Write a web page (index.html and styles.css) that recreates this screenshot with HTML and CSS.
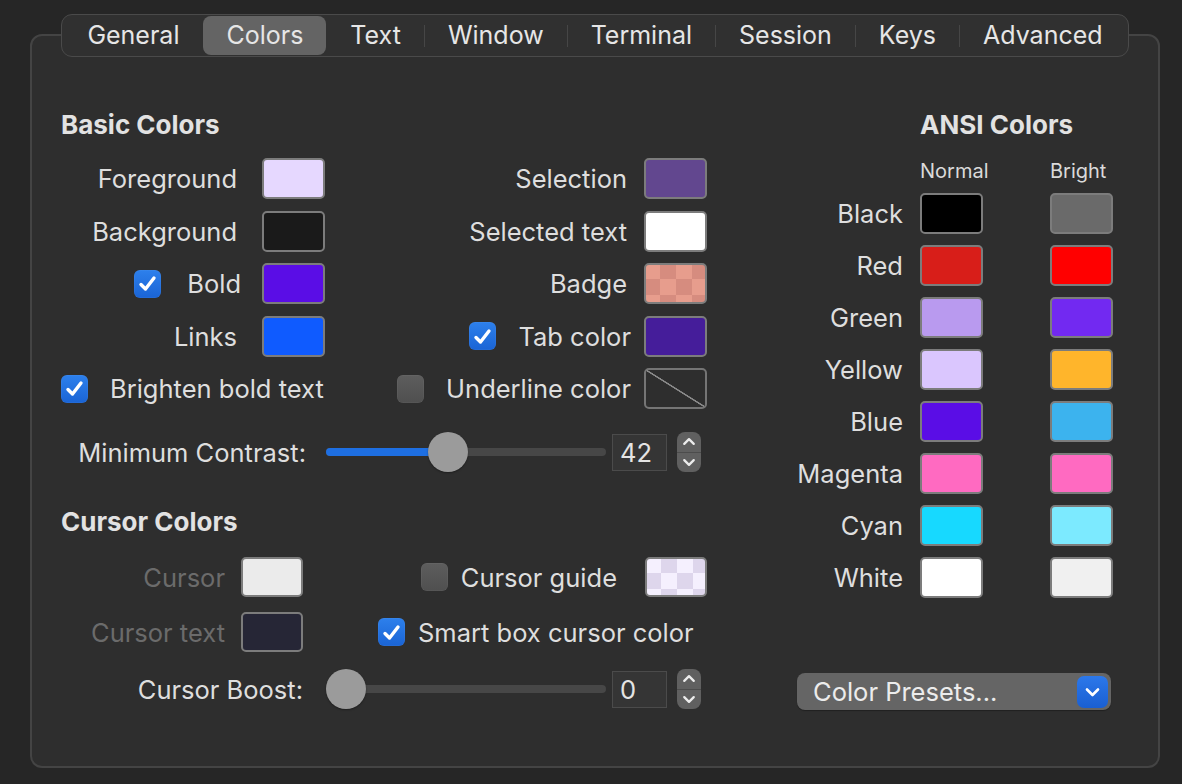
FILE: index.html
```html
<!DOCTYPE html>
<html>
<head>
<meta charset="utf-8">
<link rel="stylesheet" href="styles.css">
</head>
<body>
<div class="panel">
  <nav class="tabs">
    <span class="tab">General</span><span class="sep hidden"></span>
    <span class="tab active">Colors</span><span class="sep hidden"></span>
    <span class="tab">Text</span><span class="sep"></span>
    <span class="tab">Window</span><span class="sep"></span>
    <span class="tab">Terminal</span><span class="sep"></span>
    <span class="tab">Session</span><span class="sep"></span>
    <span class="tab">Keys</span><span class="sep"></span>
    <span class="tab">Advanced</span>
  </nav>

  <div class="content">
    <section class="left">
      <h2 class="heading">Basic Colors</h2>
      <div class="basic-grid">
        <div class="cell col-a">Foreground</div>
        <div class="swatch c-fg"></div>
        <div class="cell col-b">Selection</div>
        <div class="swatch c-sel"></div>

        <div class="cell col-a">Background</div>
        <div class="swatch c-bg"></div>
        <div class="cell col-b">Selected text</div>
        <div class="swatch c-white"></div>

        <div class="cell col-a chk"><span class="checkbox on"><svg viewBox="0 0 27 27"><path d="M7 14.5 L11.5 19 L20 8" /></svg></span><span>Bold</span></div>
        <div class="swatch c-bold"></div>
        <div class="cell col-b">Badge</div>
        <div class="swatch c-badge"></div>

        <div class="cell col-a">Links</div>
        <div class="swatch c-links"></div>
        <div class="cell col-b chk"><span class="checkbox on"><svg viewBox="0 0 27 27"><path d="M7 14.5 L11.5 19 L20 8" /></svg></span><span>Tab color</span></div>
        <div class="swatch c-tab"></div>

        <div class="cell span-a"><span class="checkbox on"><svg viewBox="0 0 27 27"><path d="M7 14.5 L11.5 19 L20 8" /></svg></span><span>Brighten bold text</span></div>
        <div class="cell col-b chk"><span class="checkbox"></span><span>Underline color</span></div>
        <div class="swatch c-none"></div>
      </div>

      <div class="slider-row contrast">
        <div class="slider-label">Minimum Contrast:</div>
        <div class="slider">
          <div class="track"><div class="fill" style="width: 122px"></div></div>
          <div class="thumb" style="left: 102px"></div>
        </div>
        <div class="field">42</div>
        <div class="stepper">
          <span class="step"><svg viewBox="0 0 24 20"><path d="M7 12.5 L12 7.5 L17 12.5" /></svg></span>
          <span class="step-sep"></span>
          <span class="step"><svg viewBox="0 0 24 20"><path d="M7 7.5 L12 12.5 L17 7.5" /></svg></span>
        </div>
      </div>

      <h2 class="heading cursor-head">Cursor Colors</h2>
      <div class="cursor-grid">
        <div class="cell col-c disabled">Cursor</div>
        <div class="swatch small c-cursor"></div>
        <div class="cell col-d"><span class="checkbox"></span><span>Cursor guide</span></div>
        <div class="swatch small c-guide"></div>

        <div class="cell col-c disabled">Cursor text</div>
        <div class="swatch small c-ctext"></div>
        <div class="cell span-d"><span class="checkbox on"><svg viewBox="0 0 27 27"><path d="M7 14.5 L11.5 19 L20 8" /></svg></span><span>Smart box cursor color</span></div>
      </div>

      <div class="slider-row boost">
        <div class="slider-label">Cursor Boost:</div>
        <div class="slider">
          <div class="track"><div class="fill" style="width: 0px"></div></div>
          <div class="thumb" style="left: 0px"></div>
        </div>
        <div class="field">0</div>
        <div class="stepper">
          <span class="step"><svg viewBox="0 0 24 20"><path d="M7 12.5 L12 7.5 L17 12.5" /></svg></span>
          <span class="step-sep"></span>
          <span class="step"><svg viewBox="0 0 24 20"><path d="M7 7.5 L12 12.5 L17 7.5" /></svg></span>
        </div>
      </div>
    </section>

    <section class="ansi">
      <h2 class="heading ansi-head">ANSI Colors</h2>
      <div class="ansi-cols"><span>Normal</span><span>Bright</span></div>
      <div class="ansi-grid">
        <div class="cell ansi-label">Black</div><div class="swatch a-black"></div><div class="swatch a-bblack"></div>
        <div class="cell ansi-label">Red</div><div class="swatch a-red"></div><div class="swatch a-bred"></div>
        <div class="cell ansi-label">Green</div><div class="swatch a-green"></div><div class="swatch a-bgreen"></div>
        <div class="cell ansi-label">Yellow</div><div class="swatch a-yellow"></div><div class="swatch a-byellow"></div>
        <div class="cell ansi-label">Blue</div><div class="swatch a-blue"></div><div class="swatch a-bblue"></div>
        <div class="cell ansi-label">Magenta</div><div class="swatch a-magenta"></div><div class="swatch a-bmagenta"></div>
        <div class="cell ansi-label">Cyan</div><div class="swatch a-cyan"></div><div class="swatch a-bcyan"></div>
        <div class="cell ansi-label">White</div><div class="swatch a-white"></div><div class="swatch a-bwhite"></div>
      </div>
      <div class="presets">
        <span class="presets-text">Color Presets...</span>
        <span class="presets-btn"><svg viewBox="0 0 31 32"><path d="M10 13.5 L15.5 19 L21 13.5" /></svg></span>
      </div>
    </section>
  </div>
</div>
</body>
</html>
```

FILE: styles.css
```css
* { box-sizing: border-box; }

html, body { margin: 0; }

body {
  width: 1182px;
  height: 784px;
  overflow: hidden;
  background: #262626;
  padding: 34px 0 0 30px;
  font-family: Inter, "Noto Sans", sans-serif;
  font-size: 25.5px;
  color: #dedede;
}

.panel {
  width: 1130px;
  height: 734px;
  background: #2e2e2e;
  border: 2px solid #444444;
  border-radius: 12px;
  padding: 0 29px;
  display: flex;
  flex-direction: column;
}

/* Tabs */
.tabs {
  align-self: center;
  margin-top: -22px;
  height: 43px;
  display: flex;
  align-items: center;
  padding: 0 2px;
  background: #303030;
  border: 1px solid #4a4a4a;
  border-radius: 11px;
  font-size: 25px;
}

.tab {
  height: 39px;
  line-height: 39px;
  padding: 0 23px;
  border-radius: 8px;
  color: #e6e6e6;
  white-space: nowrap;
}

.tab.active {
  background: #646464;
}

.sep {
  width: 1px;
  height: 22px;
  background: #464646;
}

.sep.hidden { background: transparent; }

/* Content */
.content {
  display: flex;
  gap: 82px;
  margin-top: 53px;
}

.left { width: 647px; flex: none; }

.heading {
  margin: 0;
  font-size: 26px;
  font-weight: 700;
  line-height: 30px;
  color: #e2e2e2;
}

.cell {
  display: flex;
  align-items: center;
  white-space: nowrap;
}

.swatch {
  width: 63px;
  height: 41px;
  border: 2px solid #7c7c7c;
  border-radius: 5px;
}

.swatch.small { width: 62px; height: 40px; }

/* Basic colors grid */
.basic-grid {
  margin-top: 18px;
  display: grid;
  grid-template-columns: 201px 63px 319px 64px;
  grid-auto-rows: 41px;
  row-gap: 11.5px;
}

.col-a { justify-content: flex-end; padding-right: 25px; gap: 26px; }
.col-a.chk { padding-right: 21px; }
.col-b { justify-content: flex-end; padding-right: 17px; gap: 22px; }
.col-b.chk { padding-right: 13px; }
.span-a { grid-column: 1 / 3; gap: 22px; }

.checkbox {
  width: 27px;
  height: 28px;
  border-radius: 6px;
  background: linear-gradient(#5d5d5d, #4f4f4f);
  box-shadow: inset 0 0 0 0.5px rgba(255,255,255,0.08);
  display: flex;
  align-items: center;
  justify-content: center;
  flex: none;
}

.checkbox.on {
  background: linear-gradient(#2d80ec, #1a64d5);
}

.checkbox svg { width: 27px; height: 27px; }
.checkbox path {
  fill: none;
  stroke: #ffffff;
  stroke-width: 3.4;
  stroke-linecap: round;
  stroke-linejoin: round;
}

/* swatch colours */
.c-fg { background: #e6d8ff; }
.c-bg { background: #1a1a1a; }
.c-bold { background: #5a0de6; }
.c-links { background: #0f5bff; }
.c-sel { background: #62478f; }
.c-white { background: #ffffff; }
.c-badge {
  background: repeating-conic-gradient(#d68c7f 0 25%, #e79d8d 0 50%) -2px -2px / 32px 32px;
}
.c-tab { background: #451d9a; }
.c-none {
  background: linear-gradient(to top right, transparent calc(50% - 1px), #8a8a8a calc(50% - 0.5px), #8a8a8a calc(50% + 0.5px), transparent calc(50% + 1px));
  border-color: #757575;
}
.c-cursor { background: #ebebeb; }
.c-ctext { background: #262636; }
.c-guide {
  background: repeating-conic-gradient(#ded6ec 0 25%, #f5f0fe 0 50%) -2px -2px / 32px 32px;
}

/* sliders */
.slider-row {
  display: flex;
  align-items: center;
  height: 40px;
}

.contrast { margin-top: 23px; }
.boost { margin-top: 17px; }

.slider-label {
  width: 245px;
  text-align: right;
  white-space: nowrap;
}

.boost .slider-label { width: 242px; }

.slider {
  position: relative;
  width: 280px;
  height: 40px;
  margin-left: 20px;
}

.boost .slider { margin-left: 23px; }

.track {
  margin-top: 16px;
  height: 8px;
  border-radius: 4px;
  background: #474747;
  overflow: hidden;
}

.fill {
  height: 8px;
  background: #1e6fe2;
}

.thumb {
  position: absolute;
  top: 0;
  width: 40px;
  height: 40px;
  border-radius: 50%;
  background: #9b9b9b;
  box-shadow: 0 1px 2px rgba(0,0,0,0.35);
}

.field {
  margin-left: 6px;
  width: 55px;
  height: 37px;
  background: #353535;
  border: 1px solid #4b4b4b;
  padding-left: 7px;
  line-height: 35px;
  color: #e4e4e4;
}

.stepper {
  margin-left: 10px;
  width: 24px;
  height: 40px;
  border-radius: 8px;
  background: #606060;
  display: flex;
  flex-direction: column;
}

.step {
  flex: 1;
  display: flex;
  align-items: center;
  justify-content: center;
}

.step svg { width: 24px; height: 19px; }
.step path {
  fill: none;
  stroke: #ececec;
  stroke-width: 2.4;
  stroke-linecap: round;
  stroke-linejoin: round;
}

.step-sep {
  height: 1px;
  background: #4c4c4c;
}

/* Cursor colours */
.cursor-head { margin-top: 35px; }

.cursor-grid {
  margin-top: 20px;
  display: grid;
  grid-template-columns: 180px 62px 342px 63px;
  grid-auto-rows: 40px;
  row-gap: 15px;
}

.col-c { justify-content: flex-end; padding-right: 16px; }
.disabled { color: #6b6b6b; }
.col-d { justify-content: flex-end; padding-right: 28px; gap: 13px; }
.span-d { grid-column: 3 / 5; padding-left: 75px; gap: 13px; }

/* ANSI */
.ansi { width: 323px; flex: none; }
.ansi-head { padding-left: 130px; }

.ansi-cols {
  margin-top: 19px;
  padding-left: 130px;
  display: flex;
  font-size: 20px;
  line-height: 24px;
  color: #dadada;
}

.ansi-cols span { width: 130px; flex: none; }

.ansi-grid {
  margin-top: 10px;
  display: grid;
  grid-template-columns: 130px 130px 63px;
  grid-auto-rows: 41px;
  row-gap: 11px;
}

.ansi-label { justify-content: flex-end; padding-right: 17px; }

.a-black { background: #000000; }
.a-bblack { background: #6a6a6a; }
.a-red { background: #d81e19; }
.a-bred { background: #ff0000; }
.a-green { background: #b99aef; }
.a-bgreen { background: #7229f1; }
.a-yellow { background: #dac6fe; }
.a-byellow { background: #ffb52b; }
.a-blue { background: #5a0de6; }
.a-bblue { background: #3cb3ee; }
.a-magenta { background: #ff6ac1; }
.a-bmagenta { background: #ff6ac1; }
.a-cyan { background: #17d9ff; }
.a-bcyan { background: #7ceaff; }
.a-white { background: #ffffff; }
.a-bwhite { background: #f0f0f0; }

.presets {
  margin-top: 75px;
  margin-left: 7px;
  width: 314px;
  height: 37px;
  border-radius: 8px;
  background: #656565;
  box-shadow: 0 1px 1px rgba(0,0,0,0.3);
  display: flex;
  align-items: center;
  justify-content: space-between;
  padding: 0 3px 0 16px;
}

.presets-text { color: #ececec; white-space: nowrap; }

.presets-btn {
  width: 31px;
  height: 32px;
  border-radius: 7px;
  background: linear-gradient(#2c78ea, #1a5fd2);
  display: flex;
}

.presets-btn svg { width: 31px; height: 32px; }
.presets-btn path {
  fill: none;
  stroke: #ffffff;
  stroke-width: 2.6;
  stroke-linecap: round;
  stroke-linejoin: round;
}
```
